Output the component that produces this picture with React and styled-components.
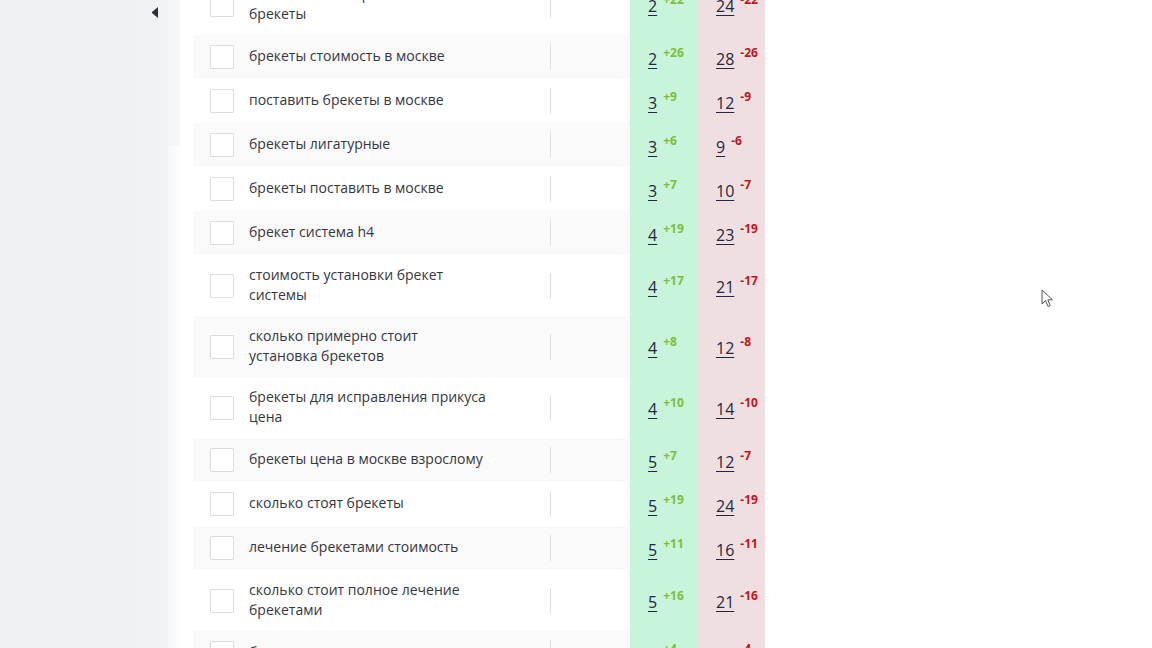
import React from "react";
import styled, { createGlobalStyle } from "styled-components";

const GlobalStyle = createGlobalStyle`
  html, body {
    margin: 0;
    padding: 0;
    height: 648px;
    overflow: hidden;
    background: #ffffff;
    font-family: "Open Sans", "Noto Sans", sans-serif;
  }
`;

const Page = styled.div`
  display: flex;
  height: 648px;
  overflow: hidden;
  position: relative;
`;

const Sidebar = styled.aside`
  width: 168px;
  flex-shrink: 0;
  background: linear-gradient(90deg, #eff1f4 0%, #eff1f4 85%, #f1f3f5 100%);
  display: flex;
  justify-content: flex-end;
  align-items: flex-start;
`;

const Collapse = styled.button`
  margin: 7px 10px 0 0;
  padding: 0;
  border: 0;
  width: 6px;
  height: 11px;
  background: transparent;
  cursor: pointer;
  display: flex;

  &::before {
    content: "";
    border-top: 5.5px solid transparent;
    border-bottom: 5.5px solid transparent;
    border-right: 6px solid #2b2f38;
  }
`;

const Gutter = styled.div`
  width: 12px;
  flex-shrink: 0;
  display: flex;
  flex-direction: column;
  background: linear-gradient(90deg, #f7f8f9 0%, #fdfdfd 100%);
`;

const GutterTop = styled.div`
  height: 145px;
  background: #f4f5f7;
`;

const Main = styled.main`
  flex: 1;
  padding-left: 13px;
  overflow: hidden;
`;

const Table = styled.div`
  width: 572px;
  margin-top: -26px;
  display: flex;
  flex-direction: column;
`;

const Row = styled.div`
  display: grid;
  grid-template-columns: 56px 301px 1px 79px 68px 67px;
  height: ${(p) => (p.$tall ? 61 : 44)}px;
  background: ${(p) => (p.$shade ? "#fafafa" : "#ffffff")};
  align-items: center;
`;

const CheckCell = styled.div`
  display: flex;
  padding-left: 17px;
`;

const Check = styled.span`
  width: 22px;
  height: 22px;
  border: 1px solid #dcdde0;
  background: #ffffff;
  border-radius: 1px;
`;

const Keyword = styled.div`
  max-width: 240px;
  font-size: 14px;
  line-height: 20px;
  color: #343642;
  padding-bottom: 2px;
`;

const Divider = styled.span`
  width: 1px;
  height: 26px;
  background: #dedfe2;
`;

const Empty = styled.div``;

const PosCell = styled.div`
  align-self: stretch;
  display: flex;
  align-items: center;
  padding: 2px 0 0 18px;
  background: ${(p) => (p.$bad ? "#f0dfe0" : "#c7f4da")};
`;

const Pos = styled.a`
  font-size: 16px;
  line-height: 20px;
  color: #232742;
  text-decoration: underline;
  text-underline-offset: 3px;
  text-decoration-thickness: 1px;
`;

const Delta = styled.span`
  margin-left: 6px;
  font-size: 12px;
  font-weight: 700;
  line-height: 12px;
  vertical-align: 8px;
  color: ${(p) => (p.$bad ? "#c4141c" : "#7cbf3c")};
`;

const Cursor = styled.svg`
  position: absolute;
  left: 1041px;
  top: 289px;
  width: 13px;
  height: 19px;
`;

const rows = [
  ["сколько стоят керамические брекеты", 2, 24, 22, true],
  ["брекеты стоимость в москве", 2, 28, 26],
  ["поставить брекеты в москве", 3, 12, 9],
  ["брекеты лигатурные", 3, 9, 6],
  ["брекеты поставить в москве", 3, 10, 7],
  ["брекет система h4", 4, 23, 19],
  ["стоимость установки брекет системы", 4, 21, 17, true],
  ["сколько примерно стоит установка брекетов", 4, 12, 8, true],
  ["брекеты для исправления прикуса цена", 4, 14, 10, true],
  ["брекеты цена в москве взрослому", 5, 12, 7],
  ["сколько стоят брекеты", 5, 24, 19],
  ["лечение брекетами стоимость", 5, 16, 11],
  ["сколько стоит полное лечение брекетами", 5, 21, 16, true],
  ["брекеты цена", 6, 10, 4],
];

export default function App() {
  return (
    <Page>
      <GlobalStyle />
      <Sidebar>
        <Collapse aria-label="collapse" />
      </Sidebar>
      <Gutter>
        <GutterTop />
      </Gutter>
      <Main>
        <Table>
          {rows.map(([text, good, bad, diff, tall], i) => (
            <Row key={text} $tall={tall} $shade={i % 2 === 1}>
              <CheckCell>
                <Check />
              </CheckCell>
              <Keyword>{text}</Keyword>
              <Divider />
              <Empty />
              <PosCell>
                <span>
                  <Pos>{good}</Pos>
                  <Delta>+{diff}</Delta>
                </span>
              </PosCell>
              <PosCell $bad>
                <span>
                  <Pos>{bad}</Pos>
                  <Delta $bad>-{diff}</Delta>
                </span>
              </PosCell>
            </Row>
          ))}
        </Table>
      </Main>
      <Cursor viewBox="0 0 13 19">
        <path
          d="M1 1 L1 15 L4.5 11.5 L7 17.5 L9.2 16.6 L6.8 10.8 L11.5 10.8 Z"
          fill="#ffffff"
          stroke="#555"
          strokeWidth="1"
          strokeLinejoin="round"
        />
      </Cursor>
    </Page>
  );
}
